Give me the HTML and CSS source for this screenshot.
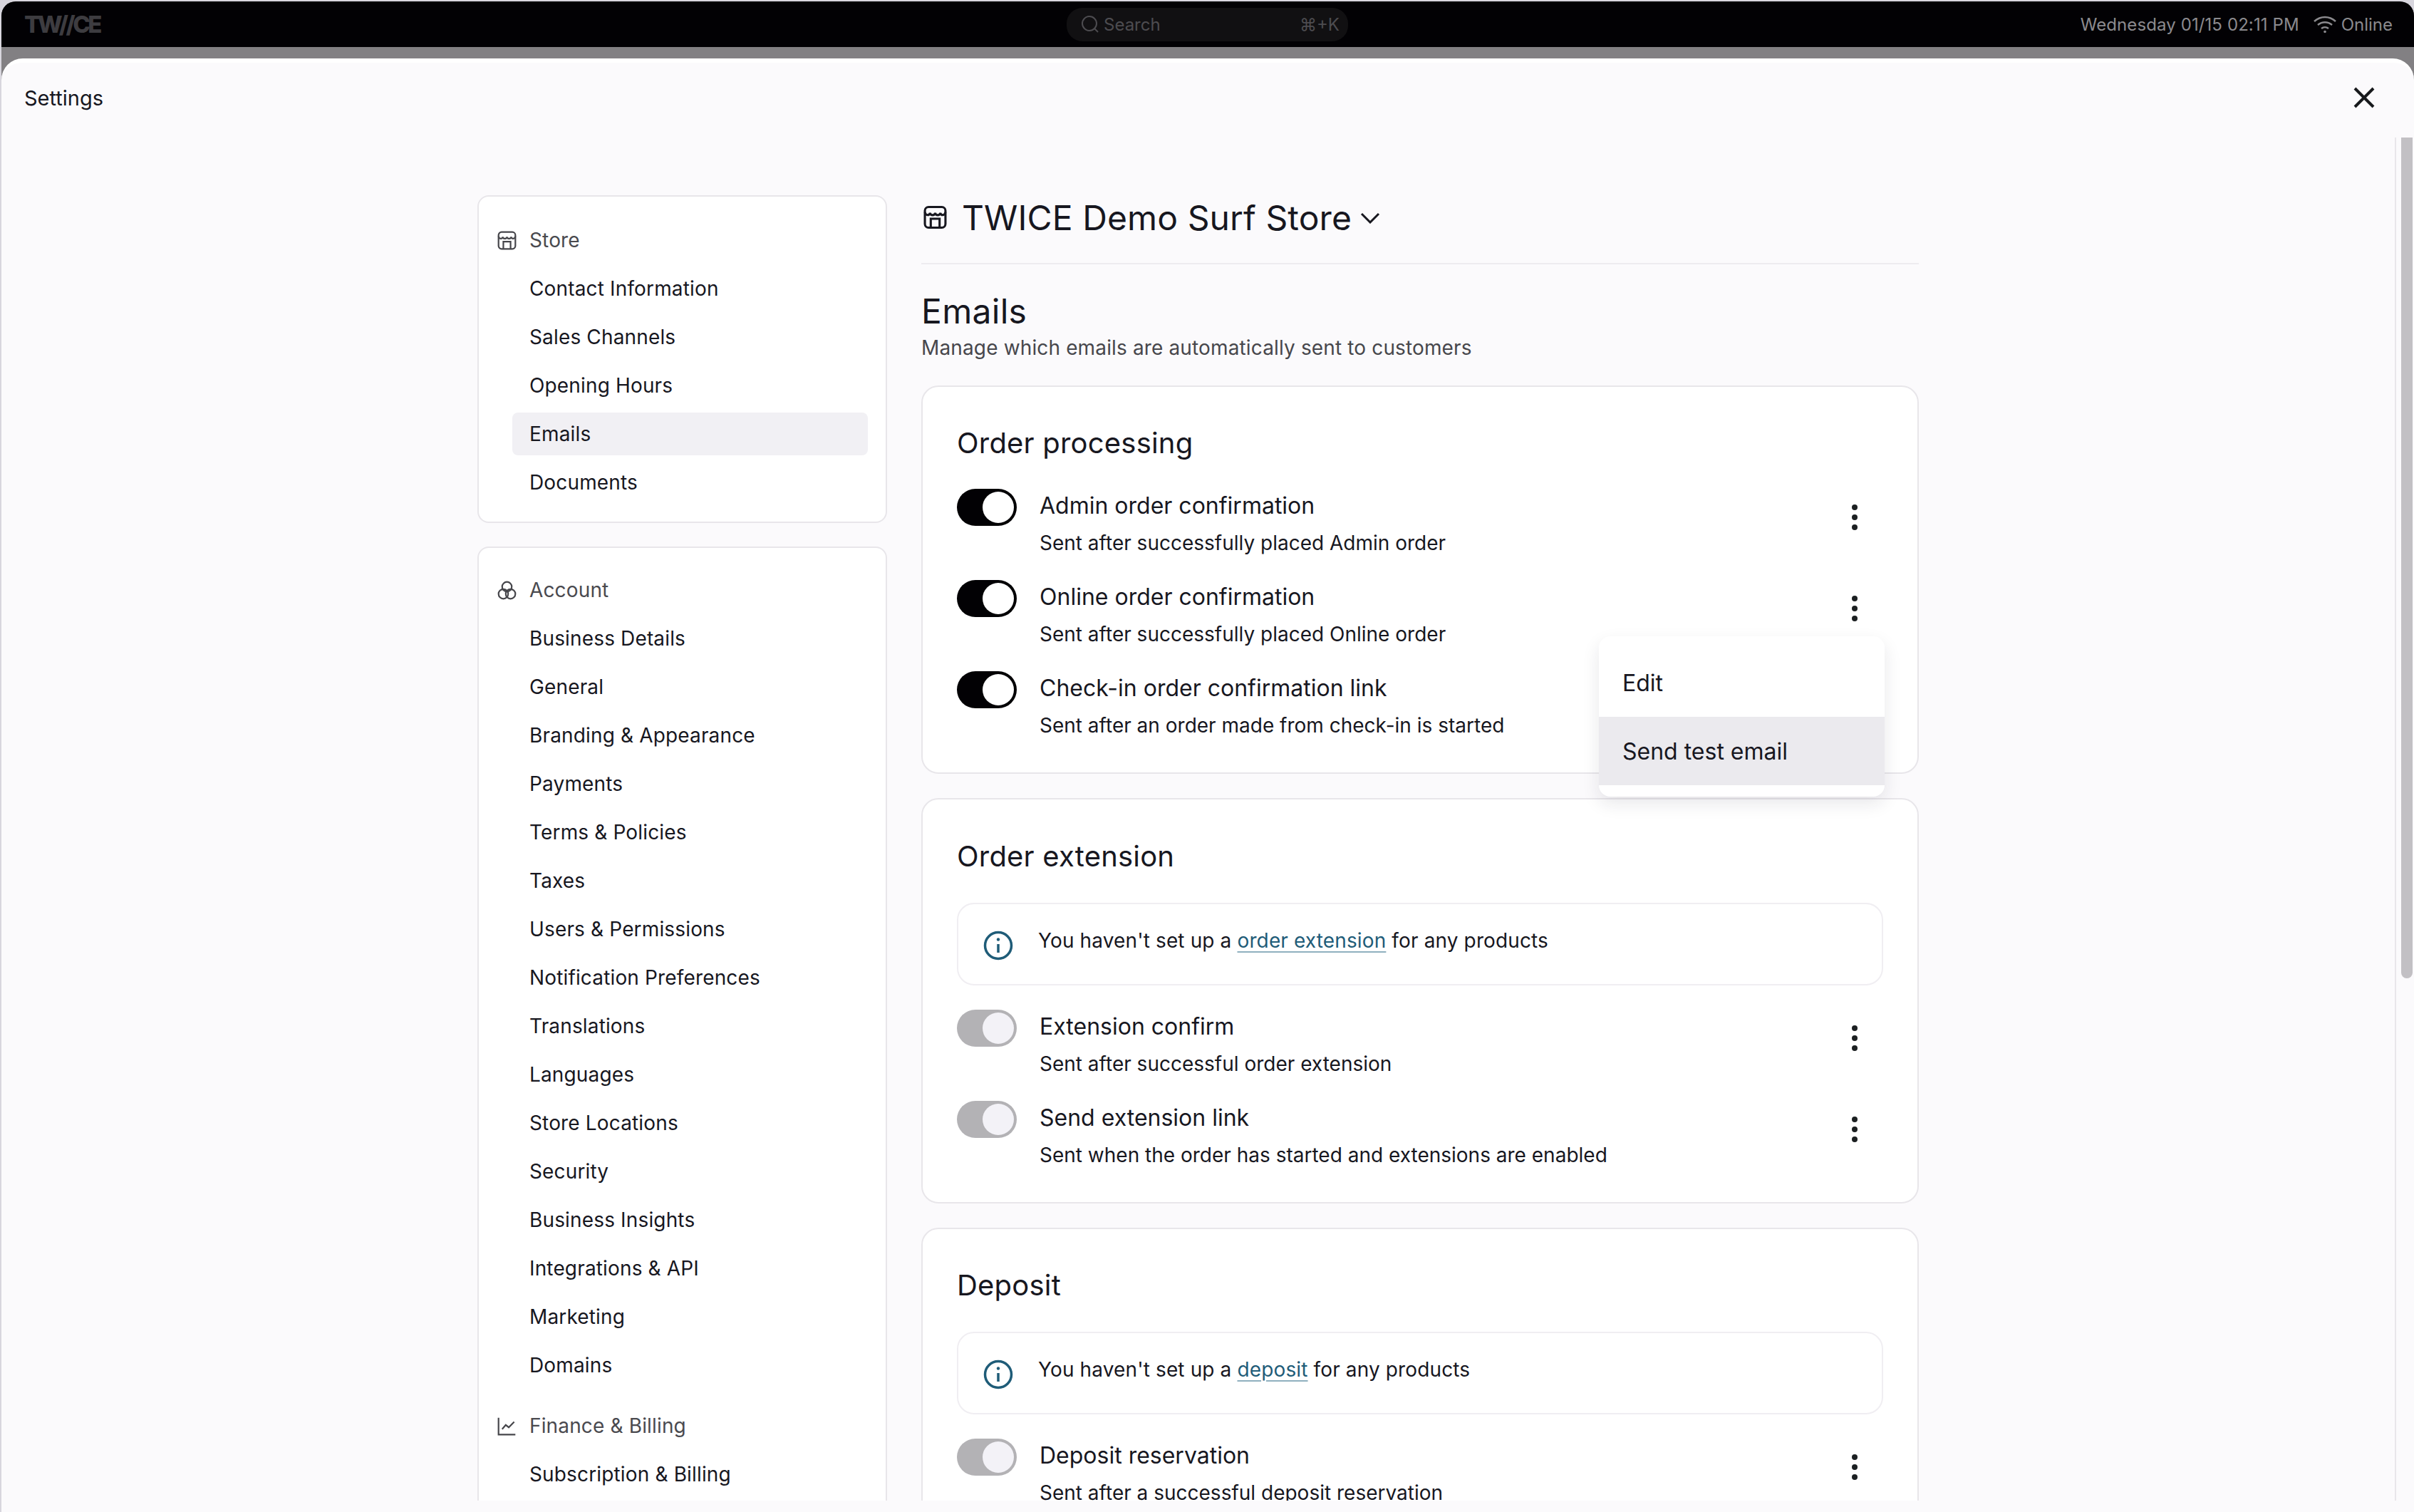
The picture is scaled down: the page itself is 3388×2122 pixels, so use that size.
FILE: index.html
```html
<!DOCTYPE html>
<html lang="en">
<head>
  <meta charset="UTF-8">
  <title>Settings</title>
  <link rel="stylesheet" href="styles.css">
</head>
<body>

<div class="shell">

  <header class="topbar">
    <div class="logo">TW//CE</div>
    <div class="search">
      <svg class="search-icon" viewBox="0 0 26 26"><circle cx="12" cy="12" r="10"/><path d="M19 19l5 5"/></svg>
      <span class="search-text">Search</span>
      <span class="search-key">⌘+K</span>
    </div>
    <div class="status">
      <span class="status-date">Wednesday 01/15 02:11 PM</span>
      <svg class="wifi" viewBox="0 0 34 26"><path d="M2 9c9-8 21-8 30 0M7 14c6-5 14-5 20 0M12 19c3-2.500 7-2.500 10 0"/><circle cx="17" cy="23.500" r="1.800"/></svg>
      <span>Online</span>
    </div>
  </header>

  <div class="modal">
    <div class="modal-head">
      <span class="modal-title">Settings</span>
      <svg class="close" viewBox="0 0 30 30"><path d="M2 2l26 26M28 2L2 28"/></svg>
    </div>

    <div class="modal-body">

      <aside class="sidebar">
        <nav class="side-card side-first">
          <div class="side-label">
            <svg class="side-icon" viewBox="0 0 32 32"><rect x="2" y="2" width="28" height="28" rx="5"/><path d="M2 9c1 5 6 5 7 1 1 4 6 4 7 0 1 4 6 4 7 0 1 4 6 4 7-1M10 30V18h12v12"/></svg>
            Store
          </div>
          <ul class="side-list">
            <li class="side-item">Contact Information</li>
            <li class="side-item">Sales Channels</li>
            <li class="side-item">Opening Hours</li>
            <li class="side-item active">Emails</li>
            <li class="side-item">Documents</li>
          </ul>
        </nav>

        <nav class="side-card">
          <div class="side-label">
            <svg class="side-icon" viewBox="0 0 32 32"><circle cx="16" cy="10" r="8"/><circle cx="10" cy="22" r="8"/><circle cx="22" cy="22" r="8"/></svg>
            Account
          </div>
          <ul class="side-list">
            <li class="side-item">Business Details</li>
            <li class="side-item">General</li>
            <li class="side-item">Branding &amp; Appearance</li>
            <li class="side-item">Payments</li>
            <li class="side-item">Terms &amp; Policies</li>
            <li class="side-item">Taxes</li>
            <li class="side-item">Users &amp; Permissions</li>
            <li class="side-item">Notification Preferences</li>
            <li class="side-item">Translations</li>
            <li class="side-item">Languages</li>
            <li class="side-item">Store Locations</li>
            <li class="side-item">Security</li>
            <li class="side-item">Business Insights</li>
            <li class="side-item">Integrations &amp; API</li>
            <li class="side-item">Marketing</li>
            <li class="side-item">Domains</li>
          </ul>
          <div class="side-label side-label-next">
            <svg class="side-icon" viewBox="0 0 32 32"><path d="M2 2v28h28M8 21l6-7 5 4 9-9"/></svg>
            Finance &amp; Billing
          </div>
          <ul class="side-list">
            <li class="side-item">Subscription &amp; Billing</li>
          </ul>
        </nav>
      </aside>

      <main class="content">
        <div class="store-head">
          <svg class="store-icon" viewBox="0 0 32 32"><rect x="2" y="2" width="28" height="28" rx="5"/><path d="M2 9c1 5 6 5 7 1 1 4 6 4 7 0 1 4 6 4 7 0 1 4 6 4 7-1M10 30V18h12v12"/></svg>
          <span class="store-name">TWICE Demo Surf Store</span>
          <svg class="chevron" viewBox="0 0 28 16"><path d="M2 2l12 12L26 2"/></svg>
        </div>

        <h1 class="page-title">Emails</h1>
        <p class="page-sub">Manage which emails are automatically sent to customers</p>

        <section class="card">
          <h2 class="card-title">Order processing</h2>
          <div class="row">
            <span class="toggle"><span class="knob"></span></span>
            <div class="row-text">
              <div class="row-title">Admin order confirmation</div>
              <div class="row-sub">Sent after successfully placed Admin order</div>
            </div>
            <svg class="kebab" viewBox="0 0 56 56"><circle cx="28" cy="14" r="4"/><circle cx="28" cy="28" r="4"/><circle cx="28" cy="42" r="4"/></svg>
          </div>
          <div class="row">
            <span class="toggle"><span class="knob"></span></span>
            <div class="row-text">
              <div class="row-title">Online order confirmation</div>
              <div class="row-sub">Sent after successfully placed Online order</div>
            </div>
            <svg class="kebab" viewBox="0 0 56 56"><circle cx="28" cy="14" r="4"/><circle cx="28" cy="28" r="4"/><circle cx="28" cy="42" r="4"/></svg>
            <div class="menu">
              <div class="menu-item">Edit</div>
              <div class="menu-item hover">Send test email</div>
            </div>
          </div>
          <div class="row">
            <span class="toggle"><span class="knob"></span></span>
            <div class="row-text">
              <div class="row-title">Check-in order confirmation link</div>
              <div class="row-sub">Sent after an order made from check-in is started</div>
            </div>
          </div>
        </section>

        <section class="card card-ext">
          <h2 class="card-title has-info">Order extension</h2>
          <div class="info">
            <svg class="info-icon" viewBox="0 0 42 42"><circle cx="21" cy="21" r="18.500"/><path d="M21 19v12"/><circle cx="21" cy="12.500" r="2.200" class="info-dot"/></svg>
            <span>You haven't set up a <a class="link">order extension</a> for any products</span>
          </div>
          <div class="row">
            <span class="toggle off"><span class="knob"></span></span>
            <div class="row-text">
              <div class="row-title">Extension confirm</div>
              <div class="row-sub">Sent after successful order extension</div>
            </div>
            <svg class="kebab" viewBox="0 0 56 56"><circle cx="28" cy="14" r="4"/><circle cx="28" cy="28" r="4"/><circle cx="28" cy="42" r="4"/></svg>
          </div>
          <div class="row">
            <span class="toggle off"><span class="knob"></span></span>
            <div class="row-text">
              <div class="row-title">Send extension link</div>
              <div class="row-sub">Sent when the order has started and extensions are enabled</div>
            </div>
            <svg class="kebab" viewBox="0 0 56 56"><circle cx="28" cy="14" r="4"/><circle cx="28" cy="28" r="4"/><circle cx="28" cy="42" r="4"/></svg>
          </div>
        </section>

        <section class="card">
          <h2 class="card-title has-info">Deposit</h2>
          <div class="info">
            <svg class="info-icon" viewBox="0 0 42 42"><circle cx="21" cy="21" r="18.500"/><path d="M21 19v12"/><circle cx="21" cy="12.500" r="2.200" class="info-dot"/></svg>
            <span>You haven't set up a <a class="link">deposit</a> for any products</span>
          </div>
          <div class="row">
            <span class="toggle off"><span class="knob"></span></span>
            <div class="row-text">
              <div class="row-title">Deposit reservation</div>
              <div class="row-sub">Sent after a successful deposit reservation</div>
            </div>
            <svg class="kebab" viewBox="0 0 56 56"><circle cx="28" cy="14" r="4"/><circle cx="28" cy="28" r="4"/><circle cx="28" cy="42" r="4"/></svg>
          </div>
        </section>
      </main>

      <div class="scrollbar"><div class="thumb"></div></div>
    </div>
  </div>

</div>

</body>
</html>
```

FILE: styles.css
```css
* {
  box-sizing: border-box;
}
html, body {
  margin: 0;
  height: 100%;
  overflow: hidden;
}
body {
  background-color: #d8d6de;
  font-family: Inter, "Liberation Sans", sans-serif;
  color: #17171f;
  padding: 2px 0 0 2px;
}
svg {
  display: block;
  flex: none;
}

.shell {
  height: 100%;
  display: flex;
  flex-direction: column;
  background-color: #828083;
  border-radius: 20px 20px 0 0;
  overflow: hidden;
}

/* top bar */
.topbar {
  height: 64px;
  flex: none;
  background-color: #020104;
  display: flex;
  align-items: center;
  padding: 0 30px 0 32px;
}
.logo {
  width: 1463px;
  color: #3d3c40;
  font-size: 33px;
  font-weight: 800;
  letter-spacing: -3.500px;
}
.search {
  width: 395px;
  height: 47px;
  background-color: #111012;
  border-radius: 22px;
  display: flex;
  align-items: center;
  padding: 0 12px 0 20px;
  color: #4d4c50;
  font-size: 24px;
}
.search-icon {
  width: 26px;
  height: 26px;
  fill: none;
  stroke: #4d4c50;
  stroke-width: 2;
  margin-right: 6px;
}
.search-text {
  flex: 1;
}
.status {
  margin-left: auto;
  display: flex;
  align-items: center;
  color: #8b8a8e;
  font-size: 24px;
}
.status-date {
  letter-spacing: 0.1px;
}
.wifi {
  width: 34px;
  height: 26px;
  margin: 0 6px 0 19px;
  fill: none;
  stroke: #8b8a8e;
  stroke-width: 2.500;
}
.wifi circle {
  fill: #8b8a8e;
  stroke: none;
}

/* settings modal */
.modal {
  margin-top: 16px;
  flex: 1;
  min-height: 0;
  display: flex;
  flex-direction: column;
  background-color: #fbfafc;
  border-top: 6px solid #fff;
  border-radius: 30px 30px 0 0;
  padding-bottom: 16px;
}
.modal-head {
  height: 98px;
  flex: none;
  display: flex;
  align-items: center;
  justify-content: space-between;
  padding: 0 55px 0 32px;
}
.modal-title {
  font-size: 29px;
}
.close {
  width: 30px;
  height: 30px;
  fill: none;
  stroke: #17191c;
  stroke-width: 4;
}
.modal-body {
  flex: 1;
  min-height: 0;
  overflow: hidden;
  position: relative;
  display: flex;
  align-items: flex-start;
  padding: 88px 0 0 668px;
}

/* sidebar */
.sidebar {
  width: 575px;
  flex: none;
  margin-right: 48px;
}
.side-card {
  background-color: #fff;
  border: 2px solid #e8e6ea;
  border-radius: 16px;
  padding: 25px 0 20px;
  margin-bottom: 33px;
}
.side-first {
  padding-top: 27px;
  padding-bottom: 21px;
}
.side-label {
  height: 68px;
  display: flex;
  align-items: center;
  padding-left: 26px;
  font-size: 28px;
  letter-spacing: 0.15px;
  color: #4a4a4f;
}
.side-label-next {
  margin-top: 17px;
}
.side-icon {
  width: 27px;
  height: 27px;
  margin-right: 18px;
  fill: none;
  stroke: #46464b;
  stroke-width: 2.600;
}
.side-list {
  list-style: none;
  margin: 0 25px 0 47px;
  padding: 0;
  display: flex;
  flex-direction: column;
}
.side-item {
  height: 60px;
  margin: 4px 0;
  padding-left: 24px;
  display: flex;
  align-items: center;
  border-radius: 8px;
  font-size: 28px;
  letter-spacing: 0.15px;
}
.side-item.active {
  background-color: #f1f0f4;
}

/* main column */
.content {
  width: 1400px;
  flex: none;
  padding-top: 2px;
}
.store-head {
  height: 95px;
  display: flex;
  align-items: flex-start;
  border-bottom: 2px solid #eeecf0;
}
.store-icon {
  width: 33px;
  height: 34px;
  margin: 12px 21px 0 3px;
  fill: none;
  stroke: #17171f;
  stroke-width: 3;
}
.store-name {
  font-size: 48px;
  line-height: 60px;
  letter-spacing: 0.1px;
}
.chevron {
  width: 28px;
  height: 16px;
  margin: 22px 0 0 12px;
  fill: none;
  stroke: #17171f;
  stroke-width: 3;
}
.page-title {
  margin: 38px 0 0;
  font-size: 48px;
  line-height: 56px;
  font-weight: 400;
  letter-spacing: 0.3px;
}
.page-sub {
  margin: 3px 0 33px;
  font-size: 28px;
  line-height: 40px;
  letter-spacing: 0.14px;
  color: #47474c;
}

.card {
  background-color: #fff;
  border: 2px solid #e8e6ea;
  border-radius: 24px;
  padding: 51px 48px 14px;
  margin-bottom: 34px;
}
.card-ext {
  padding-top: 52px;
}
.card-title {
  margin: 0 0 36px;
  font-size: 40px;
  line-height: 56px;
  font-weight: 400;
  letter-spacing: 0.2px;
}
.card-title.has-info {
  margin-bottom: 37px;
}
.row {
  height: 128px;
  display: flex;
  align-items: flex-start;
  position: relative;
}
.toggle {
  width: 84px;
  height: 52px;
  flex: none;
  border-radius: 26px;
  background-color: #020104;
  display: flex;
  justify-content: flex-end;
  align-items: center;
  padding-right: 4px;
  margin-right: 32px;
}
.knob {
  width: 44px;
  height: 44px;
  border-radius: 50%;
  background-color: #fff;
}
.toggle.off {
  background-color: #b3b2b5;
}
.toggle.off .knob {
  background-color: #f3f2f7;
}
.row-text {
  flex: 1;
}
.row-title {
  font-size: 32px;
  line-height: 48px;
}
.row-sub {
  margin-top: 8px;
  font-size: 28px;
  line-height: 40px;
}
.kebab {
  width: 56px;
  height: 56px;
  margin: 12px 12px 0 0;
  fill: #1c2022;
}

.info {
  height: 116px;
  border: 2px solid #f0eef2;
  border-radius: 24px;
  display: flex;
  align-items: flex-start;
  padding: 31px 0 0 35px;
  margin-bottom: 34px;
  font-size: 28px;
  line-height: 40px;
  letter-spacing: 0.13px;
}
.info-icon {
  width: 42px;
  height: 42px;
  margin: 6px 35px 0 0;
  fill: none;
  stroke: #1f5c78;
  stroke-width: 3.500;
}
.info-dot {
  fill: #1f5c78;
  stroke: none;
}
.link {
  color: #1f5c78;
  text-decoration: underline;
  text-decoration-color: #8fb0bf;
  text-decoration-thickness: 2px;
  text-underline-offset: 5px;
}

/* dropdown over the second row */
.menu {
  position: absolute;
  top: 79px;
  right: -2px;
  width: 401px;
  padding: 17px 0 16px;
  background-color: #fff;
  border-radius: 16px;
  box-shadow: 0 10px 24px rgba(30, 25, 45, 0.1);
  z-index: 2;
}
.menu-item {
  height: 96px;
  display: flex;
  align-items: center;
  padding-left: 33px;
  font-size: 32px;
}
.menu-item.hover {
  background-color: #ebeaee;
}

.scrollbar {
  position: absolute;
  top: 7px;
  bottom: 0;
  left: 3359px;
  width: 25px;
  border-left: 2px solid #e8e6ea;
  padding-left: 7px;
}
.thumb {
  width: 16px;
  height: 1180px;
  background-color: #c2c0c4;
  border-radius: 0 0 8px 8px;
}
```
